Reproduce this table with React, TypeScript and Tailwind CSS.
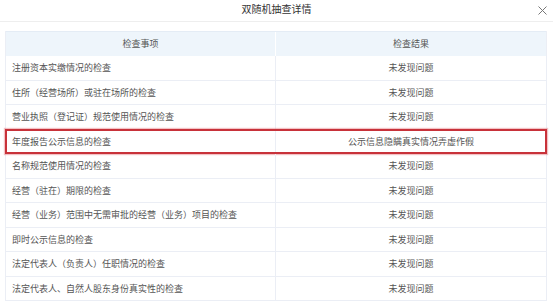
import React from "react";

const rows: [string, string, boolean?][] = [
  ["注册资本实缴情况的检查", "未发现问题"],
  ["住所（经营场所）或驻在场所的检查", "未发现问题"],
  ["营业执照（登记证）规范使用情况的检查", "未发现问题"],
  ["年度报告公示信息的检查", "公示信息隐瞒真实情况弄虚作假", true],
  ["名称规范使用情况的检查", "未发现问题"],
  ["经营（驻在）期限的检查", "未发现问题"],
  ["经营（业务）范围中无需审批的经营（业务）项目的检查", "未发现问题"],
  ["即时公示信息的检查", "未发现问题"],
  ["法定代表人（负责人）任职情况的检查", "未发现问题"],
  ["法定代表人、自然人股东身份真实性的检查", "未发现问题"],
];

export default function App() {
  return (
    <div
      className="w-[553px] h-[306px] bg-white overflow-hidden text-[#555]"
      style={{ fontFamily: '"Noto Sans CJK SC", "Noto Sans", sans-serif' }}
    >
      <div className="relative h-[22px] border-b border-[#eeeeee] flex items-center justify-center">
        <span className="text-[10px] text-[#333] leading-none -mt-[3px]">双随机抽查详情</span>
        <svg
          className="absolute right-[6px] top-[6px]"
          width="9"
          height="9"
          viewBox="0 0 9 9"
        >
          <path d="M0.5 0.5 L8.5 8.5 M8.5 0.5 L0.5 8.5" stroke="#777" strokeWidth="1" />
        </svg>
      </div>
      <div className="mt-[9px] mx-[5px] w-[542px] border-l border-r border-[#ebeef5] text-[9px]">
        <div className="grid grid-cols-2 h-[25px] bg-[#eef5fb] border-t border-[#e4ecf5]">
          <div className="flex items-center justify-center border-r border-white">检查事项</div>
          <div className="flex items-center justify-center">检查结果</div>
        </div>
        {rows.map(([a, b, hl], i) => (
          <div
            key={i}
            className="relative grid grid-cols-2 h-[24.5px] border-b border-[#ebeef5]"
          >
            <div className="flex items-center pl-[6px] border-r border-[#ebeef5] whitespace-nowrap">
              {a}
            </div>
            <div className="flex items-center justify-center whitespace-nowrap">{b}</div>
            {hl && (
              <div className="absolute -left-[1px] -right-[1px] -top-[1px] bottom-[-1px] border-2 border-[#c8323a] shadow-[0_0_1px_1px_rgba(220,80,90,0.35)]" />
            )}
          </div>
        ))}
      </div>
    </div>
  );
}
